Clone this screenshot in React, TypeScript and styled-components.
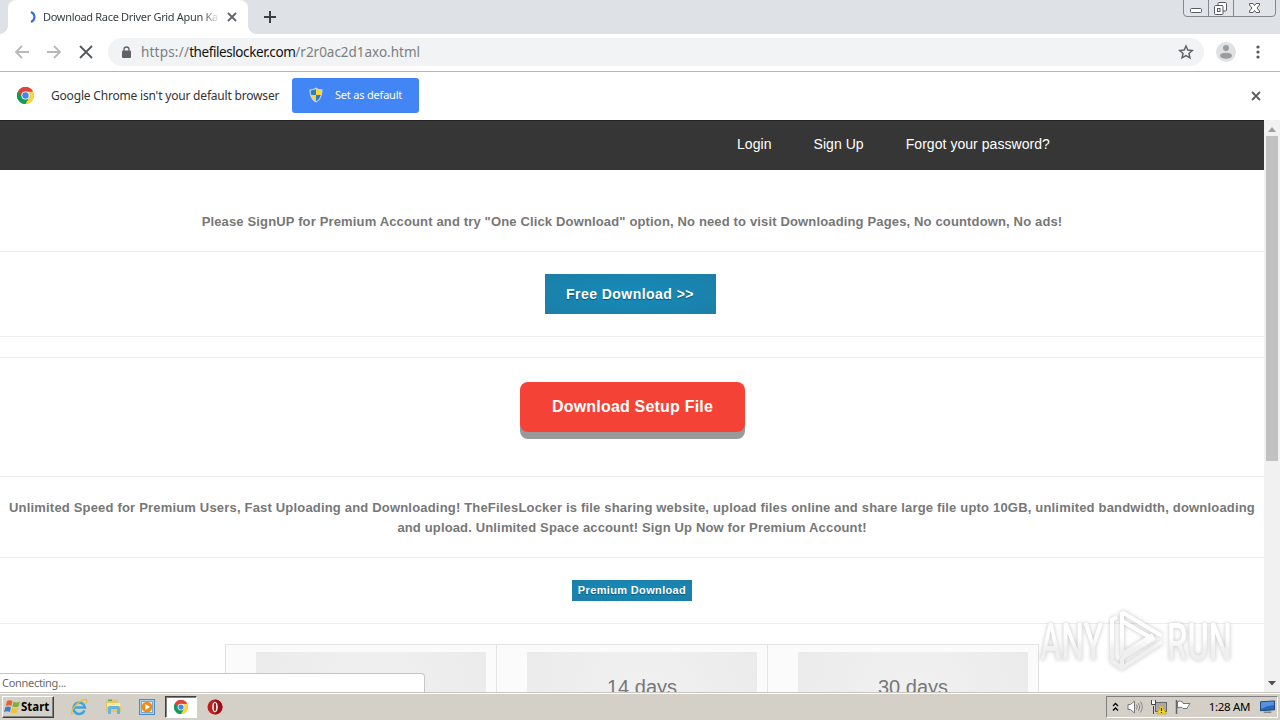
import React from "react";
import styled, { createGlobalStyle } from "styled-components";

const GlobalStyle = createGlobalStyle`
	* {
		box-sizing: border-box;
	}
	body {
		margin: 0;
		overflow: hidden;
		background: #fff;
		font-family: "Liberation Sans", Arial, sans-serif;
	}
	svg {
		display: block;
		flex: none;
	}
`;

const uiFont = `"Noto Sans", "DejaVu Sans", sans-serif`;

interface LabelProps {
	size: number;
	color?: string;
	spacing?: number;
	bold?: boolean;
}

const ChromeLogo: React.FC<{ size: number }> = ({ size }) => (
	<svg width={size} height={size} viewBox="0 0 48 48">
		<path d="M24 24 3.2 12A24 24 0 0 1 44.8 12Z" fill="#ea4335" />
		<path d="M24 24 44.8 12A24 24 0 0 1 24 48Z" fill="#fbbc05" />
		<path d="M24 24V48A24 24 0 0 1 3.2 12Z" fill="#34a853" />
		<path d="M24 12.5H45A24 24 0 0 1 24 48L34.5 29Z" fill="#fdd247" />
		<path d="M24 12.5H45A24 24 0 0 0 3.2 12L14 30Z" fill="#db4437" />
		<path d="M3.2 12 14 30 34.5 29 24 48A24 24 0 0 1 3.2 12Z" fill="#109d58" />
		<circle cx="24" cy="24" r="11.5" fill="#fff" />
		<circle cx="24" cy="24" r="9" fill="#4285f4" />
	</svg>
);

const Shield = () => (
	<svg width="14" height="16" viewBox="0 0 14 16">
		<path d="M7 .5C9 2 11 2.400 13.500 2.300 13.700 8 12 13 7 15.500 2 13 .3 8 .5 2.300 3 2.400 5 2 7 .5Z" fill="#c9d3da" />
		<path d="M7 2C5.500 3 3.500 3.400 1.800 3.500 1.700 5.500 1.900 7 2.300 8H7Z" fill="#2b7cc4" />
		<path d="M7 2C8.500 3 10.500 3.400 12.200 3.500 12.300 5.500 12.100 7 11.700 8H7Z" fill="#fbd63a" />
		<path d="M7 8H2.300C3 10.800 4.500 13 7 14.300Z" fill="#fbd63a" />
		<path d="M7 8H11.700C11 10.800 9.500 13 7 14.300Z" fill="#2b7cc4" />
	</svg>
);

const Cross: React.FC<{ size: number; stroke?: number; color?: string }> = ({ size, stroke = 1.8, color = "#5f6368" }) => (
	<svg width={size} height={size} viewBox={`0 0 ${size} ${size}`}>
		<path d={`M1 1 ${size - 1} ${size - 1}M${size - 1} 1 1 ${size - 1}`} stroke={color} strokeWidth={stroke} />
	</svg>
);

const WindowControls = () => (
	<Controls>
		<svg width="94" height="18" viewBox="0 0 94 18">
			<path d="M.5 0V13Q.5 16.500 4 16.500H89Q92.500 16.500 92.500 13V0" fill="#e1e4e9" stroke="#84888f" />
			<path d="M25.500 0V16M50.500 0V16" stroke="#84888f" />
			<rect x="7.500" y="8.500" width="11" height="4" rx="1" fill="#fff" stroke="#555a66" />
			<rect x="35" y="2.500" width="8.500" height="8.500" rx="1" fill="#fff" stroke="#555a66" />
			<rect x="31.500" y="5.500" width="8.500" height="9" rx="1" fill="#fff" stroke="#555a66" />
			<rect x="34.500" y="8.500" width="2.500" height="3" fill="#fff" stroke="#555a66" />
			<path d="M66.500 3.500H70L71.500 5.500 73 3.500H76.500V5L74 8 76.500 11V12.500H73L71.500 10.500 70 12.500H66.500V11L69 8 66.500 5Z" fill="#fff" stroke="#555a66" />
		</svg>
	</Controls>
);

const Watermark = () => (
	<WatermarkWrap>
		<svg width="210" height="80" viewBox="0 0 210 80">
			<defs>
				<linearGradient id="fade" gradientUnits="userSpaceOnUse" x1="0" y1="20" x2="0" y2="70">
					<stop offset="0.35" stopColor="#fff" />
					<stop offset="0.6" stopColor="#ececec" />
				</linearGradient>
			</defs>
			<g fill="url(#fade)" fontFamily="Roboto, sans-serif" fontSize="51" fontWeight="500">
				<text x="11" y="60" textLength="63" lengthAdjust="spacingAndGlyphs">ANY</text>
				<text x="138" y="60" textLength="65" lengthAdjust="spacingAndGlyphs">RUN</text>
			</g>
			<g fill="none" stroke="url(#fade)" strokeWidth="4" strokeLinejoin="round">
				<path d="M88 17 83 20V61L93 68V58" />
				<path d="M93 12V54L124 35" />
				<path d="M93 12 133 36" />
				<path d="M93 21 124 39 93 58" />
				<path d="M133 42 93 68" />
			</g>
		</svg>
	</WatermarkWrap>
);

const App: React.FC = () => {
	const plans = ["", "14 days", "30 days"];

	return (
		<Screen>
			<GlobalStyle />
			<TabStrip>
				<Tab>
					<svg width="7" height="12" viewBox="0 0 7 12">
						<path d="M1 1Q4.500 2.500 4.500 6T1 11" fill="none" stroke="#2f6fe0" strokeWidth="2" />
					</svg>
					<TabTitle size={11} color="#3c4043" spacing={-0.32}>
						Download Race Driver Grid Apun KaGames
					</TabTitle>
					<Cross size={10} />
				</Tab>
				<svg width="12" height="12" viewBox="0 0 12 12">
					<path d="M6 0V12M0 6H12" stroke="#3c4043" strokeWidth="2" />
				</svg>
				<WindowControls />
			</TabStrip>

			<Toolbar>
				<NavIcons>
					<svg width="16" height="14" viewBox="0 0 16 14">
						<path d="M15 7H2M8 1 2 7 8 13" fill="none" stroke="#b6b8ba" strokeWidth="1.800" />
					</svg>
					<svg width="16" height="14" viewBox="0 0 16 14">
						<path d="M1 7H14M8 1 14 7 8 13" fill="none" stroke="#b6b8ba" strokeWidth="1.800" />
					</svg>
					<Cross size={14} color="#54575b" />
				</NavIcons>
				<AddressBar>
					<svg width="9" height="12" viewBox="0 0 9 12">
						<path d="M2 5V3.500A2.500 2.500 0 0 1 7 3.500V5" fill="none" stroke="#5f6368" strokeWidth="1.300" />
						<rect y="4.500" width="9" height="7.500" rx="1" fill="#5f6368" />
					</svg>
					<Url size={13.5} color="#7b7f83" spacing={-0.02}>
						<span>https://</span>
						<b>thefileslocker.com</b>/r2r0ac2d1axo.html
					</Url>
					<svg width="16" height="16" viewBox="0 0 24 24">
						<path d="m12 3 2.700 6.100 6.800.6-5.100 4.500 1.500 6.600L12 17.300l-5.900 3.500 1.500-6.600-5.100-4.500 6.800-.6Z" fill="none" stroke="#5f6368" strokeWidth="2.200" />
					</svg>
				</AddressBar>
				<svg width="20" height="20" viewBox="0 0 20 20">
					<circle cx="10" cy="10" r="10" fill="#dfe1e3" />
					<circle cx="10" cy="6" r="3" fill="#9a9da0" />
					<ellipse cx="10" cy="13.700" rx="6" ry="3" fill="#9a9da0" />
				</svg>
				<svg width="4" height="14" viewBox="0 0 4 14">
					<circle cx="2" cy="2" r="1.600" fill="#54575b" />
					<circle cx="2" cy="7" r="1.600" fill="#54575b" />
					<circle cx="2" cy="12" r="1.600" fill="#54575b" />
				</svg>
			</Toolbar>

			<InfoBar>
				<ChromeLogo size={17} />
				<InfoText size={12} color="#333" spacing={-0.19}>
					Google Chrome isn't your default browser
				</InfoText>
				<DefaultButton>
					<Shield />
					<Label size={11} color="#fff" spacing={-0.2}>
						Set as default
					</Label>
				</DefaultButton>
				<Cross size={10} stroke={2} />
			</InfoBar>

			<Viewport>
				<Page>
					<Menu>
						<a>Login</a>
						<a>Sign Up</a>
						<a>Forgot your password?</a>
					</Menu>
					<Section height={82} padding={42}>
						<Notice spacing={0.15}>
							Please SignUP for Premium Account and try "One Click Download" option, No need to visit Downloading Pages, No countdown, No ads!
						</Notice>
					</Section>
					<Section height={85} padding={22}>
						<FreeButton>Free Download &gt;&gt;</FreeButton>
					</Section>
					<Section height={21} padding={0} />
					<Section height={119} padding={24}>
						<SetupButton>Download Setup File</SetupButton>
					</Section>
					<Section height={81} padding={21}>
						<Notice spacing={0.185}>
							Unlimited Speed for Premium Users, Fast Uploading and Downloading! TheFilesLocker is file sharing website, upload files online and share large file upto 10GB, unlimited bandwidth, downloading
						</Notice>
						<Notice spacing={0.15}>and upload. Unlimited Space account! Sign Up Now for Premium Account!</Notice>
					</Section>
					<Section height={66} padding={22}>
						<PremiumButton>Premium Download</PremiumButton>
					</Section>
					<Plans>
						{plans.map((plan, i) => (
							<Plan key={i}>
								<div>{plan}</div>
							</Plan>
						))}
					</Plans>
				</Page>
				<Scrollbar>
					<svg width="8" height="5" viewBox="0 0 8 5">
						<path d="M0 5 4 0 8 5Z" fill="#a0a0a0" />
					</svg>
					<Thumb />
					<svg width="8" height="5" viewBox="0 0 8 5">
						<path d="M0 0 4 4.500 8 0Z" fill="#505050" />
					</svg>
				</Scrollbar>
				<StatusBubble>
					<Label size={11} color="#6a6a6a" spacing={-0.3}>
						Connecting...
					</Label>
				</StatusBubble>
			</Viewport>

			<Taskbar>
				<StartButton>
					<svg width="17" height="16" viewBox="0 0 17 16">
						<path d="M3 2Q6 .5 8.500 2.300L7.300 7Q5 5.500 1.700 7Z" fill="#e8622c" />
						<path d="M9.500 2.800Q12 4.300 15.800 2.700L14.500 7.400Q11.500 8.800 8.300 7.400Z" fill="#7fae3c" />
						<path d="M1.400 8.200Q4.500 6.800 7 8.400L5.800 13Q3.500 11.700 0 13Z" fill="#3b7fc9" />
						<path d="M8 8.800Q11 10.300 14.200 8.800L13 13.400Q9.800 15 6.800 13.400Z" fill="#f5c12e" />
					</svg>
					<Label size={11.5} color="#000" bold spacing={0}>
						Start
					</Label>
				</StartButton>
				<QuickLaunch>
					<TaskItem>
						<svg width="18" height="18" viewBox="0 0 18 18">
							<path d="M14.500 12.500A5.700 5.700 0 1 1 14.900 9.500H5" fill="none" stroke="#3da5dc" strokeWidth="2.600" />
							<path d="M2.500 16.500C-1 14 7 3 15 1.500 18 1.200 17 4 16.200 5.300" fill="none" stroke="#e9bd38" strokeWidth="1.300" />
						</svg>
					</TaskItem>
					<TaskItem>
						<svg width="17" height="17" viewBox="0 0 17 17">
							<path d="M1 3H6L7.500 1.500H13V5H16V14H1Z" fill="#e3c66b" />
							<path d="M2 5H15.500V9H2Z" fill="#fae7a1" />
							<path d="M3 1.500H7V3H3Z" fill="#60a95a" />
							<path d="M3 16V9.500Q3 8 5 8H13Q15 8 15 9.500V16H12V11H6V16Z" fill="#63b6dd" />
						</svg>
					</TaskItem>
					<TaskItem>
						<svg width="16" height="16" viewBox="0 0 16 16">
							<rect x=".5" y=".5" width="15" height="15" fill="#a8d0ef" stroke="#4c8cc0" />
							<rect x="2.500" y="2.500" width="11" height="11" fill="#d9ecf8" stroke="#75aad2" />
							<circle cx="8" cy="8" r="5.300" fill="#f38b16" />
							<path d="M6.300 5 11 8 6.300 11Z" fill="#fff" />
						</svg>
					</TaskItem>
					<TaskItem active>
						<ChromeLogo size={14} />
					</TaskItem>
					<TaskItem>
						<svg width="16" height="16" viewBox="0 0 16 16">
							<circle cx="8" cy="8" r="7.500" fill="#c11d1d" />
							<path d="M8 .5A7.500 7.500 0 0 1 8 15.500Z" fill="#9d0e12" />
							<ellipse cx="8" cy="8" rx="2.800" ry="5.200" fill="#fff" />
							<ellipse cx="8" cy="8" rx="1.200" ry="4.200" fill="#9d2020" />
						</svg>
					</TaskItem>
				</QuickLaunch>
				<Tray>
					<svg width="7" height="10" viewBox="0 0 7 10">
						<path d="M1 4 3.500 1.500 6 4M1 8.500 3.500 6 6 8.500" fill="none" stroke="#000" strokeWidth="1.400" />
					</svg>
					<svg width="16" height="16" viewBox="0 0 16 16">
						<path d="M1 5.500H3.500L7.500 2V14L3.500 10.500H1Z" fill="#fff" stroke="#777" />
						<path d="M9.500 5.500Q11 8 9.500 10.500M11.500 4Q14 8 11.500 12M13.500 2.500Q17 8 13.500 13.500" fill="none" stroke="#888" />
					</svg>
					<svg width="16" height="16" viewBox="0 0 16 16">
						<rect x="4.500" y="3.500" width="11" height="9" fill="#aaa" stroke="#666" />
						<path d="M2.500 7V15M.5 1V5.500H4.500V1" fill="none" stroke="#444" />
						<path d="M1 2H4V5H1Z" fill="#fff" />
						<path d="M10.500 6 15.500 15H5.500Z" fill="#f8d51b" stroke="#c99c00" strokeWidth=".6" />
						<path d="M10.500 9V12M10.500 13V14" stroke="#222" strokeWidth="1.200" />
					</svg>
					<svg width="16" height="16" viewBox="0 0 16 16">
						<path d="M1.500 1V15" stroke="#666" strokeWidth="1.500" />
						<path d="M2.500 2.500Q5 1 8 3.500V4.500H15L13 7.500 12 9.500H8L7 8.500Q5 7.500 2.500 9Z" fill="#fff" stroke="#777" />
					</svg>
					<Clock size={11.5} color="#000" spacing={-0.35}>
						1:28 AM
					</Clock>
					<svg width="15" height="14" viewBox="0 0 16 14">
						<path d="M.5 1.500 15.500.5V10L.5 11Z" fill="#2866bd" stroke="#17407c" />
						<path d="M1 2 15 1V5Q8 5 1 9Z" fill="#5793dc" />
						<path d="M4 12.500H12" stroke="#555" />
					</svg>
				</Tray>
			</Taskbar>
			<Watermark />
		</Screen>
	);
};
export default App;

// style 영역
const Screen = styled.div`
	position: relative;
	display: flex;
	flex-direction: column;
	width: 1280px;
	height: 720px;
	overflow: hidden;
`;

const Label = styled.span.withConfig({ shouldForwardProp: (p) => !["size", "spacing", "bold"].includes(p) })<LabelProps>`
	font-family: ${uiFont};
	font-size: ${({ size }) => size}px;
	font-weight: ${({ bold }) => (bold ? 700 : 400)};
	color: ${({ color }) => color};
	letter-spacing: ${({ spacing = 0 }) => spacing}px;
	line-height: 16px;
	white-space: nowrap;
`;

const TabStrip = styled.div`
	display: flex;
	align-items: center;
	height: 34px;
	background: #dee1e6;
	> svg {
		margin-left: 16px;
	}
`;

const Tab = styled.div`
	position: relative;
	display: flex;
	align-items: center;
	width: 240px;
	height: 34px;
	margin-left: 8px;
	padding: 0 11px 0 22px;
	border-radius: 8px 8px 0 0;
	background: #fff;
	/* flared feet on both sides of the tab */
	&::before,
	&::after {
		content: "";
		position: absolute;
		bottom: 0;
		width: 8px;
		height: 8px;
	}
	&::before {
		left: -8px;
		background: radial-gradient(circle at 0 0, transparent 7.5px, #fff 8px);
	}
	&::after {
		right: -8px;
		background: radial-gradient(circle at 100% 0, transparent 7.5px, #fff 8px);
	}
`;

const TabTitle = styled(Label)`
	width: 175px;
	margin: 0 9px 0 6px;
	overflow: hidden;
	mask-image: linear-gradient(90deg, #000 160px, transparent 177px);
`;

const Controls = styled.div`
	align-self: flex-start;
	margin-left: auto;
	margin-right: 3px;
`;

const Toolbar = styled.div`
	display: flex;
	align-items: center;
	height: 38px;
	padding: 0 20px 1px 14px;
	border-bottom: 1px solid #b5b6b8;
	background: #fff;
	> svg {
		margin-left: 12px;
	}
	> svg:last-child {
		margin-left: 20px;
	}
`;

const NavIcons = styled.div`
	display: flex;
	align-items: center;
	gap: 16px;
	width: 94px;
	svg:last-child {
		margin-left: 1px;
	}
`;

const AddressBar = styled.div`
	display: flex;
	align-items: center;
	width: 1096px;
	height: 28px;
	padding: 0 10px 0 14px;
	border-radius: 14px;
	background: #f1f3f4;
	svg:last-child {
		margin-left: auto;
	}
`;

const Url = styled(Label)`
	margin-left: 10px;
	span {
		letter-spacing: 0.2px;
	}
	b {
		font-weight: 400;
		letter-spacing: -0.42px;
		color: #111;
	}
`;

const InfoBar = styled.div`
	display: flex;
	align-items: center;
	height: 48px;
	padding: 0 19px 1px 17px;
	background: #fff;
	> svg:last-child {
		margin-left: auto;
	}
`;

const InfoText = styled(Label)`
	width: 241px;
	margin-left: 17px;
`;

const DefaultButton = styled.div`
	display: flex;
	align-items: center;
	gap: 12px;
	width: 127px;
	height: 35px;
	padding: 0 0 1px 17px;
	border-radius: 3px;
	background: #4285f4;
`;

const Viewport = styled.div`
	position: relative;
	display: flex;
	height: 572px;
	overflow: hidden;
`;

const Page = styled.div`
	width: 1264px;
	background: #fff;
`;

const Menu = styled.div`
	display: flex;
	gap: 42px;
	height: 50px;
	padding-left: 737px;
	border-top: 1px solid #222;
	background: #363636;
	font-size: 14px;
	line-height: 46px;
	letter-spacing: 0.05px;
	color: #fff;
`;

const Section = styled.div<{ height: number; padding: number }>`
	height: ${({ height }) => height}px;
	padding-top: ${({ padding }) => padding}px;
	border-bottom: 1px solid #eee;
	text-align: center;
`;

const Notice = styled.div<{ spacing: number }>`
	font-size: 13px;
	font-weight: 700;
	line-height: 20px;
	letter-spacing: ${({ spacing }) => spacing}px;
	white-space: nowrap;
	color: #777;
`;

const FreeButton = styled.div`
	width: 171px;
	height: 40px;
	margin-left: 545px;
	padding-right: 1px;
	background: radial-gradient(#148bbb, #1d7ea6);
	font-size: 14px;
	font-weight: 700;
	line-height: 40px;
	letter-spacing: 0.45px;
	text-shadow: 0 1px 1px rgba(0, 0, 0, 0.4);
	color: #fff;
`;

const SetupButton = styled.div`
	width: 225px;
	height: 50px;
	margin-left: 520px;
	border-radius: 8px;
	background: #f44336;
	box-shadow: 0 7px #999;
	font-size: 16px;
	font-weight: 700;
	line-height: 49px;
	letter-spacing: 0.2px;
	color: #fff;
`;

const PremiumButton = styled.div`
	width: 120px;
	height: 21px;
	margin-left: 572px;
	background: radial-gradient(#148cbd, #1d7ea6);
	font-size: 11px;
	font-weight: 700;
	line-height: 20px;
	letter-spacing: 0.35px;
	text-shadow: 0 1px 1px rgba(0, 0, 0, 0.4);
	color: #fff;
`;

const Plans = styled.div`
	display: flex;
	width: 814px;
	margin: 20px 0 0 225px;
	border: 1px solid #e3e3e3;
	border-right: 0;
`;

const Plan = styled.div`
	width: 271px;
	height: 100px;
	padding: 7px 10px 0 30px;
	border-right: 1px solid #e3e3e3;
	background: #fbfbfb;
	div {
		height: 93px;
		background: radial-gradient(circle at 50% 50%, #f1f1f1, #ebebeb);
		font-size: 20px;
		line-height: 70px;
		text-align: center;
		color: #777;
	}
`;

const Scrollbar = styled.div`
	display: flex;
	flex-direction: column;
	align-items: center;
	justify-content: space-between;
	width: 16px;
	padding: 7px 0 6px;
	background: #f1f1f1;
`;

const Thumb = styled.div`
	width: 12px;
	height: 325px;
	margin: 4px 0 auto;
	background: #c1c1c1;
`;

const StatusBubble = styled.div`
	position: absolute;
	left: 0;
	bottom: 0;
	width: 425px;
	height: 19px;
	padding-left: 2px;
	border: solid #c6c6c6;
	border-width: 1px 1px 0 0;
	border-radius: 0 4px 0 0;
	background: #fff;
	line-height: 15px;
`;

const Taskbar = styled.div`
	display: flex;
	align-items: center;
	height: 28px;
	padding: 0 2px;
	border-top: 1px solid #c9c6bf;
	box-shadow: inset 0 1px #fff;
	background: #d4d0c8;
`;

const StartButton = styled.div`
	display: flex;
	align-items: center;
	width: 52px;
	height: 22px;
	padding-left: 1px;
	border: 1px solid;
	border-color: #fff #404040 #404040 #fff;
	box-shadow: inset -1px -1px #808080;
`;

const QuickLaunch = styled.div`
	display: flex;
	gap: 2px;
	margin-left: 9px;
`;

const TaskItem = styled.div<{ active?: boolean }>`
	display: flex;
	align-items: center;
	justify-content: center;
	width: 32px;
	height: 22px;
	border: ${({ active }) => (active ? "1px solid" : "0")};
	border-color: #404040 #fff #fff #404040;
	background: ${({ active }) => (active ? "#fff" : "none")};
	box-shadow: ${({ active }) => (active ? "inset 1px 1px #808080" : "none")};
`;

const Tray = styled.div`
	display: flex;
	align-items: center;
	gap: 8px;
	width: 172px;
	height: 22px;
	margin-left: auto;
	padding: 0 2px 0 5px;
	border: 1px solid;
	border-color: #808080 #fff #fff #808080;
	> svg:last-child {
		margin-left: 2px;
	}
`;

const Clock = styled(Label)`
	margin-left: auto;
`;

const WatermarkWrap = styled.div`
	position: absolute;
	left: 1029px;
	top: 600px;
	opacity: 0.8;
	filter: drop-shadow(0 0 2px rgba(0, 0, 0, 0.3));
`;
